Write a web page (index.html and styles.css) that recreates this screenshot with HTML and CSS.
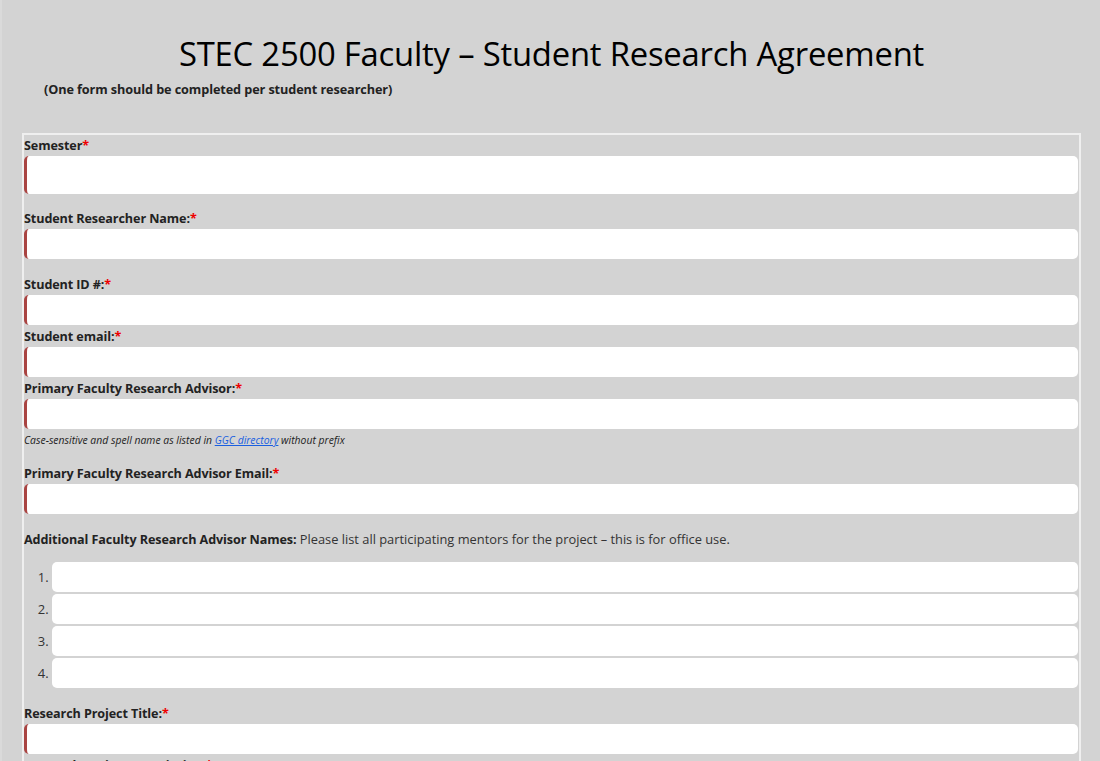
FILE: index.html
```html
<!DOCTYPE html>
<html lang="en">
<head>
<meta charset="utf-8">
<title>STEC 2500 Faculty – Student Research Agreement</title>
<link rel="stylesheet" href="styles.css">
</head>
<body>
<div class="page">
  <h1 class="title">STEC 2500 Faculty – Student Research Agreement</h1>
  <p class="subtitle">(One form should be completed per student researcher)</p>

  <form class="form-box">
    <div class="field field-gap">
      <label class="label">Semester<span class="req">*</span></label>
      <input class="input input-req input-tall" type="text">
    </div>
    <div class="field field-gap2">
      <label class="label">Student Researcher Name:<span class="req">*</span></label>
      <input class="input input-req" type="text">
    </div>
    <div class="field">
      <label class="label">Student ID #:<span class="req">*</span></label>
      <input class="input input-req" type="text">
    </div>
    <div class="field">
      <label class="label">Student email:<span class="req">*</span></label>
      <input class="input input-req" type="text">
    </div>
    <div class="field">
      <label class="label">Primary Faculty Research Advisor:<span class="req">*</span></label>
      <input class="input input-req" type="text">
      <p class="help">Case-sensitive and spell name as listed in <a href="#" class="help-link">GGC directory</a> without prefix</p>
    </div>
    <div class="field field-gap">
      <label class="label">Primary Faculty Research Advisor Email:<span class="req">*</span></label>
      <input class="input input-req" type="text">
    </div>
    <div class="field field-gap2">
      <p class="note"><strong class="label-inline">Additional Faculty Research Advisor Names:</strong> Please list all participating mentors for the project – this is for office use.</p>
      <ol class="advisors">
        <li class="advisor"><input class="input" type="text"></li>
        <li class="advisor"><input class="input" type="text"></li>
        <li class="advisor"><input class="input" type="text"></li>
        <li class="advisor"><input class="input" type="text"></li>
      </ol>
    </div>
    <div class="field">
      <label class="label">Research Project Title:<span class="req">*</span></label>
      <input class="input input-req" type="text">
    </div>
    <div class="field">
      <label class="label">Research Project Description:<span class="req">*</span></label>
      <input class="input input-req input-tall" type="text">
    </div>
  </form>
</div>
</body>
</html>
```

FILE: styles.css
```css
* {
  box-sizing: border-box;
}

html {
  background: #d3d3d3;
}

body {
  margin: 0;
  background: #d3d3d3;
  border-left: 2px solid #dadada;
  font-family: "Open Sans", "Noto Sans", "Liberation Sans", sans-serif;
  color: #222;
  height: 761px;
  overflow: hidden;
}

.page {
  padding: 0 19px 0 20px;
}

.title {
  margin: 0;
  padding-top: 34px;
  font-size: 32.8px;
  line-height: 40px;
  font-weight: 400;
  color: #000;
  text-align: center;
  letter-spacing: -0.2px;
}

.subtitle {
  margin: 6px 0 0 22px;
  font-size: 12.7px;
  line-height: 18px;
  font-weight: 700;
  color: #222;
  letter-spacing: -0.1px;
}

.form-box {
  margin-top: 35px;
  border: 2px solid #efefef;
  border-bottom: none;
  padding: 1px 1px 0 0;
  height: 700px;
}

.field {
  display: flex;
  flex-direction: column;
  margin-bottom: 2px;
}

.field-gap {
  margin-bottom: 15px;
}

.field-gap2 {
  margin-bottom: 16px;
}

.label {
  display: block;
  font-size: 12.6px;
  line-height: 18px;
  padding-top: 1px;
  font-weight: 700;
  color: #222;
  margin-bottom: 1px;
  letter-spacing: -0.1px;
}

.req {
  color: #e00;
}

.input {
  display: block;
  width: 100%;
  height: 30px;
  border: none;
  border-radius: 5px;
  background: #fff;
  font: inherit;
  margin: 0;
}

.input-req {
  border-left: 3px solid #a94442;
}

.input-tall {
  height: 38px;
}

.help {
  margin: 4px 0 15px;
  font-size: 10.4px;
  line-height: 14px;
  font-style: italic;
  color: #222;
}

.help-link {
  color: #1a5fe0;
  text-decoration: underline;
}

.note {
  margin: 0 0 13px;
  padding-top: 1px;
  font-size: 12.85px;
  line-height: 18px;
  color: #333;
}

.label-inline {
  color: #222;
  font-size: 12.6px;
  letter-spacing: -0.1px;
}

.advisors {
  margin: 0;
  padding-left: 28px;
  display: flex;
  flex-direction: column;
  gap: 2px;
}

.advisor {
  font-size: 13px;
  line-height: 30px;
  color: #333;
}

.advisor::marker {
  color: #333;
}
```
